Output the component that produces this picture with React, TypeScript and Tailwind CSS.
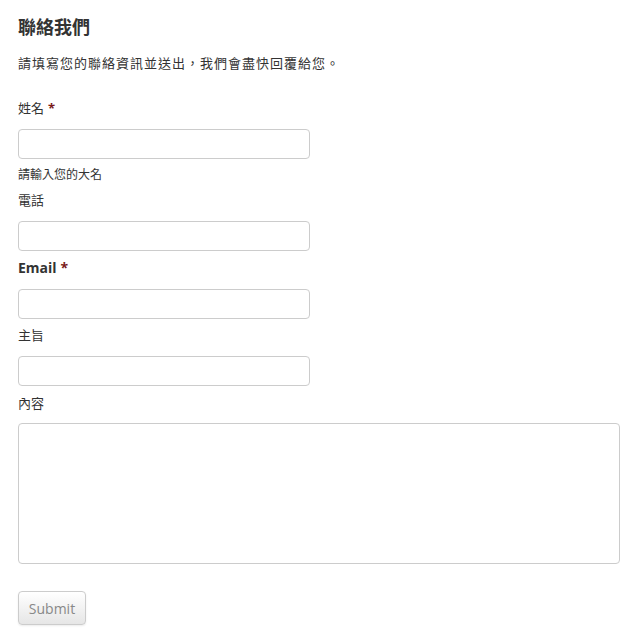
import React from "react";

const font = '"Open Sans", "Noto Sans CJK TC", sans-serif';

function Label({ text, required }: { text: string; required?: boolean }) {
  return (
    <div className="text-[13px] leading-[20px] font-normal text-[#333]">
      {text}
      {required && <span className="ml-[4px] font-bold text-[#7a1a1a]">*</span>}
    </div>
  );
}

function Input() {
  return (
    <input
      type="text"
      className="block w-[292px] h-[30px] mt-[11px] rounded-[4px] border border-[#cccccc] bg-white px-2 text-[13px] outline-none"
    />
  );
}

export default function App() {
  return (
    <div className="bg-white min-h-[641px] px-[18px] pt-[15px] text-[#333]" style={{ fontFamily: font }}>
      <h2 className="text-[18px] leading-[24px] font-bold text-[#333]">聯絡我們</h2>
      <p className="mt-[14px] text-[13px] leading-[20px] tracking-[1px] text-[#333]">
        請填寫您的聯絡資訊並送出，我們會盡快回覆給您。
      </p>

      <div className="mt-[25px]">
        <Label text="姓名" required />
        <Input />
        <div className="mt-[8px] text-[12px] leading-[16px] text-[#333]">請輸入您的大名</div>
      </div>

      <div className="mt-[7px]">
        <Label text="電話" />
        <Input />
      </div>

      <div className="mt-[7px]">
        <div className="text-[14px] leading-[20px] font-bold text-[#333]">
          Email<span className="ml-[4px] font-bold text-[#7a1a1a]">*</span>
        </div>
        <Input />
      </div>

      <div className="mt-[6px]">
        <Label text="主旨" />
        <Input />
      </div>

      <div className="mt-[7px]">
        <Label text="內容" />
        <textarea className="block w-full h-[141px] mt-[10px] rounded-[4px] border border-[#cccccc] bg-white resize-none outline-none" />
      </div>

      <button
        type="button"
        className="mt-[27px] h-[34px] w-[68px] rounded-[4px] border border-[#cccccc] bg-gradient-to-b from-[#ffffff] to-[#e6e6e6] text-[14px] text-[#888] shadow-[0_1px_2px_rgba(0,0,0,0.08)]"
      >
        Submit
      </button>
    </div>
  );
}
